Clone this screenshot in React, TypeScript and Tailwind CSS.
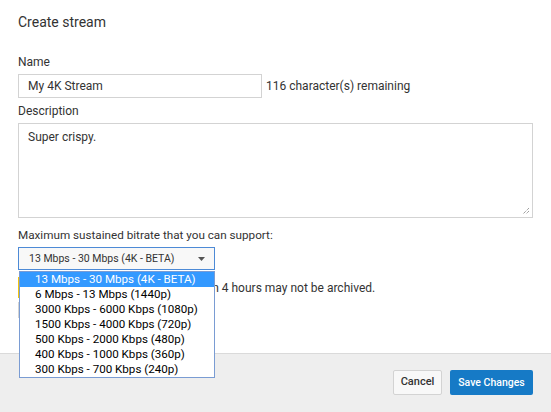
import React from 'react';

const options = [
  '13 Mbps - 30 Mbps (4K - BETA)',
  '6 Mbps - 13 Mbps (1440p)',
  '3000 Kbps - 6000 Kbps (1080p)',
  '1500 Kbps - 4000 Kbps (720p)',
  '500 Kbps - 2000 Kbps (480p)',
  '400 Kbps - 1000 Kbps (360p)',
  '300 Kbps - 700 Kbps (240p)',
];

export default function App() {
  return (
    <div
      className="flex h-[412px] w-[551px] flex-col overflow-hidden bg-white text-[#333]"
      style={{ fontFamily: 'Roboto, "Liberation Sans", Arial, sans-serif' }}
    >
      <div className="px-[18px] pt-[13px]">
        <h1 className="text-[14px] leading-[18px]">Create stream</h1>

        {/* name */}
        <div className="mt-[23px] text-[12px] leading-[16px]">Name</div>
        <div className="mt-[4px] flex items-center">
          <div className="flex h-[24px] w-[244px] items-center border border-[#d3d3d3] px-[9px] text-[12px]">
            My 4K Stream
          </div>
          <span className="ml-[4px] text-[12px]">116 character(s) remaining</span>
        </div>

        {/* description */}
        <div className="mt-[5px] text-[12px] leading-[16px]">Description</div>
        <div className="relative mt-[4px] h-[95px] w-full border border-[#d3d3d3] px-[9px] pt-[4px] text-[12px]">
          Super crispy.
          <svg className="absolute bottom-[2px] right-[2px]" width="8" height="8" viewBox="0 0 8 8">
            <path d="M7 1 L1 7 M7 4 L4 7" stroke="#777" strokeWidth="1" strokeDasharray="1 1" />
          </svg>
        </div>

        {/* bitrate */}
        <div className="mt-[9px] text-[11.7px] leading-[16px]">Maximum sustained bitrate that you can support:</div>
        <div className="relative mt-[4px]">
          <div className="flex h-[23px] w-[197px] items-center justify-between border border-[#4d8ad6] bg-[#f8f8f8] pl-[10px] pr-[9px] text-[10.5px]">
            <span>13 Mbps - 30 Mbps (4K - BETA)</span>
            <svg width="7" height="4" viewBox="0 0 7 4">
              <path d="M0 0 H7 L3.5 4 Z" fill="#555" />
            </svg>
          </div>

          <div className="mt-[7px] flex h-[21px] items-center">
            <div className="h-[21px] w-[3px] bg-[#f1c40f]" />
            <span className="ml-[90px] whitespace-nowrap text-[12px]">
              Streams longer than 4 hours may not be archived.
            </span>
          </div>
          <div className="mt-[4px] h-[16px] w-[80px] border border-[#d3d3d3] bg-[#f8f8f8]" />

          {/* open list */}
          <div className="absolute left-[1px] top-[24px] w-[196px] border border-[#7a9cd3] bg-white text-[11.6px] leading-[15px] text-black">
            {options.map((o, i) => (
              <div
                key={o}
                className={
                  i === 0
                    ? 'whitespace-nowrap bg-[#3399ff] pl-[15px] text-white'
                    : 'whitespace-nowrap pl-[15px]'
                }
              >
                {o}
              </div>
            ))}
          </div>
        </div>
      </div>

      <div className="mt-auto flex h-[59px] items-start justify-end gap-[8px] border-t border-[#dadada] bg-[#eeeeee] pr-[18px] pt-[16px]">
        <button className="h-[25px] w-[49px] rounded-[2px] border border-[#d3d3d3] bg-[#f8f8f8] text-[11px] font-medium text-[#333]">
          Cancel
        </button>
        <button className="h-[25px] w-[83px] rounded-[2px] bg-[#167ac6] text-[10.5px] font-medium text-white">
          Save Changes
        </button>
      </div>
    </div>
  );
}
